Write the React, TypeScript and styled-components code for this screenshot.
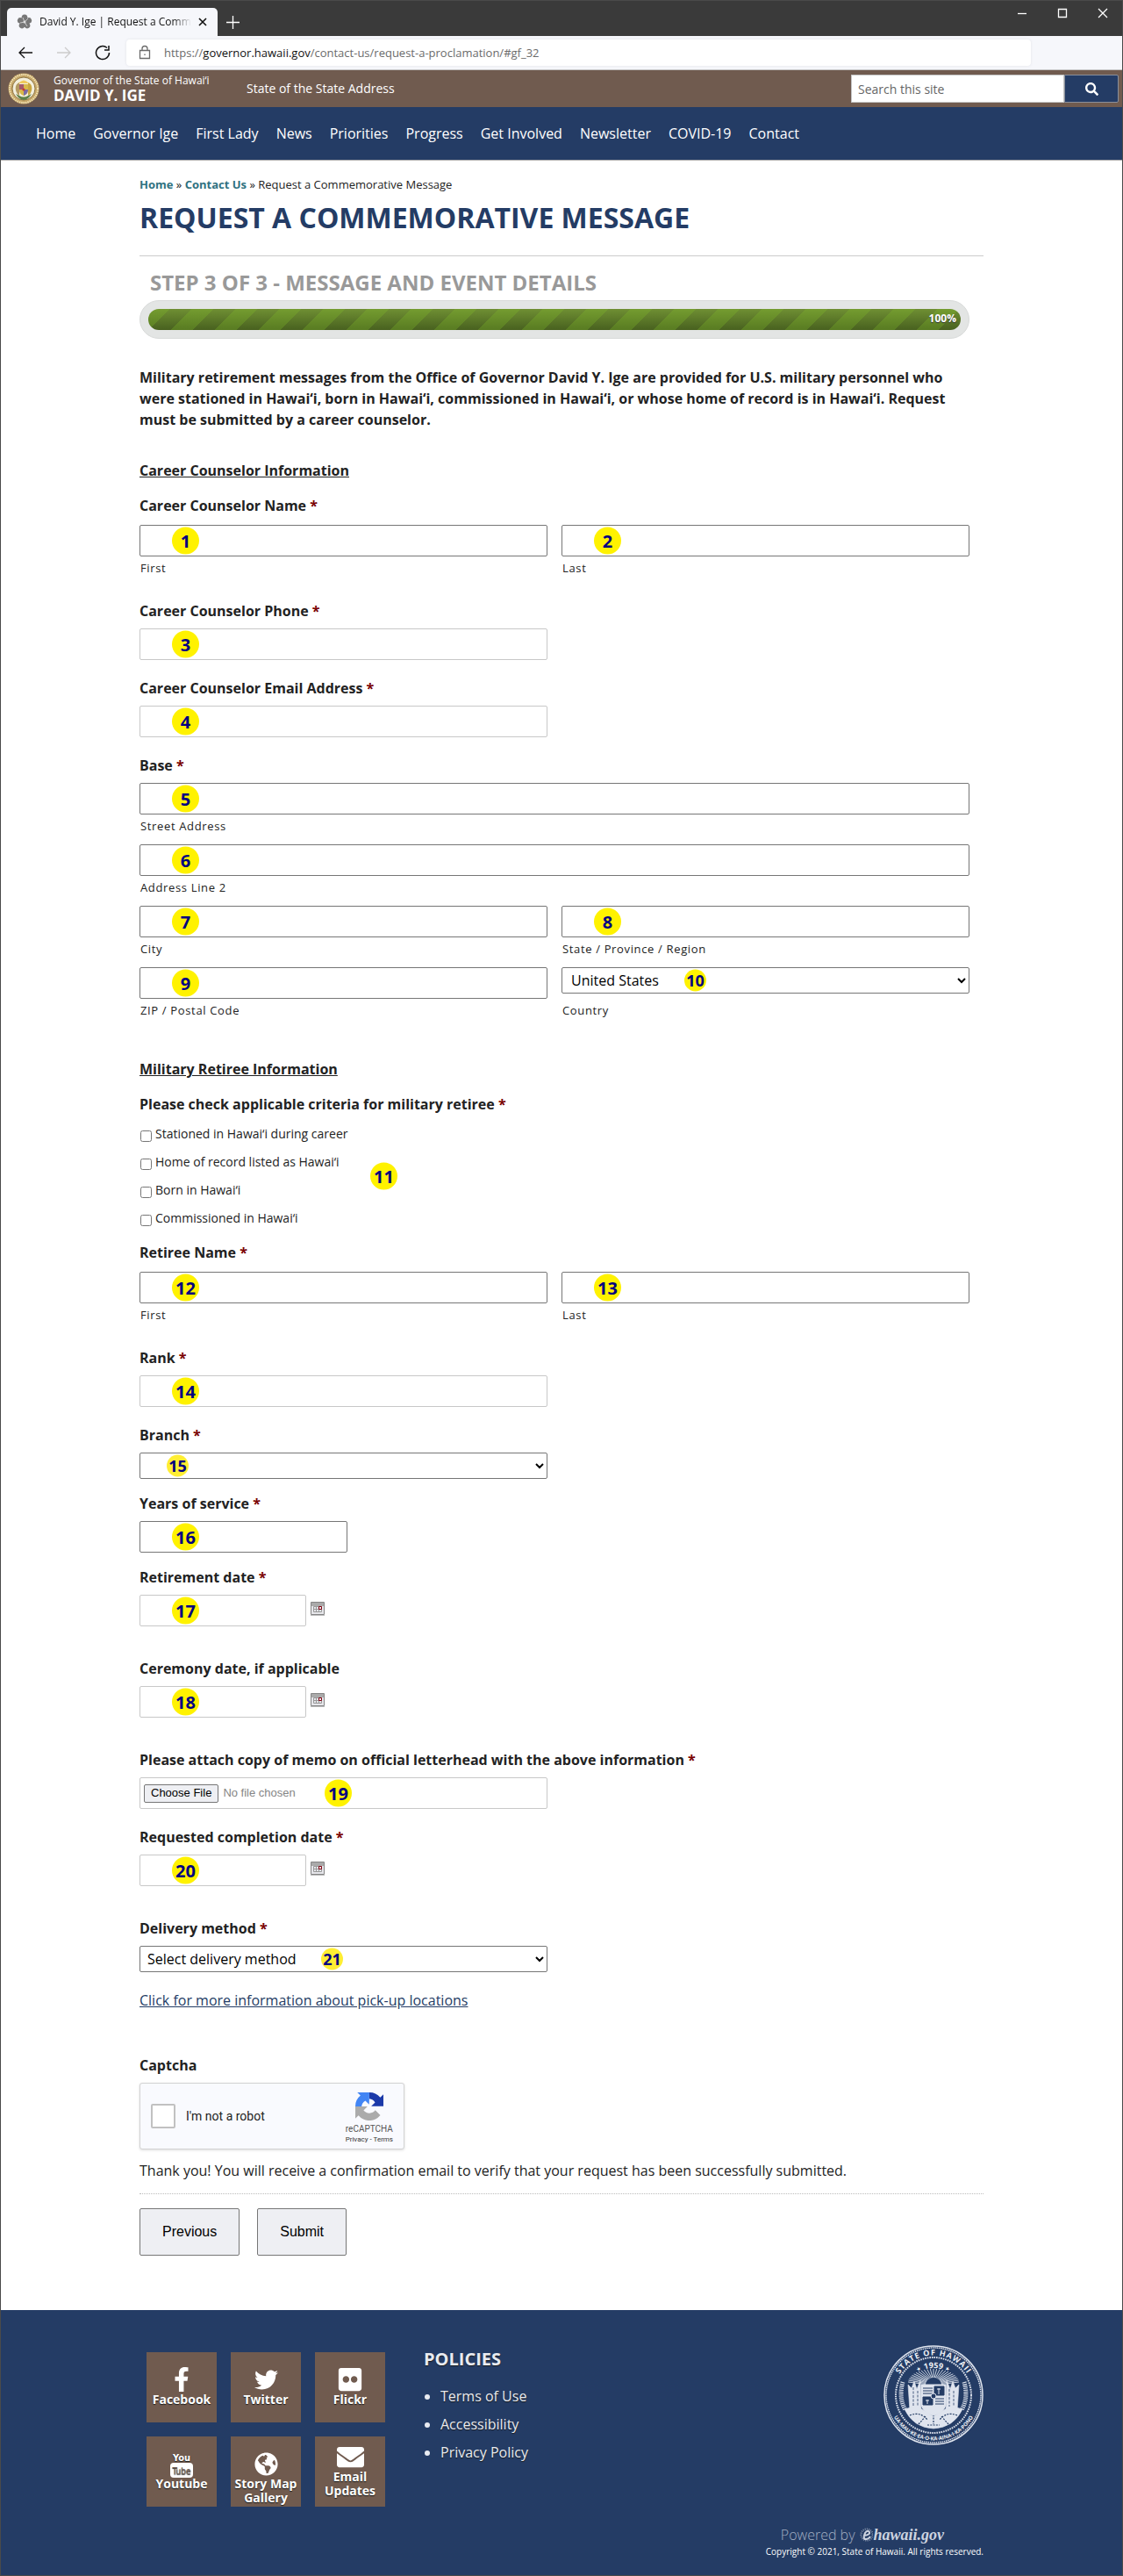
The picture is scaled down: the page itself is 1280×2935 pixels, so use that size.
import React from "react";
import styled, { createGlobalStyle } from "styled-components";
import {
  FaFacebookF,
  FaTwitter,
  FaFlickr,
  FaGlobeAmericas,
  FaEnvelope,
  FaSearch,
} from "react-icons/fa";

const navy = "#243c65";
const brown = "#705b4f";

const GlobalStyle = createGlobalStyle`
  *, *::before, *::after { box-sizing: border-box; }
  body {
    margin: 0;
    background: #fff;
    color: #222;
    font: 16px/24px "Open Sans", "Noto Sans", sans-serif;
  }
  a { color: inherit; text-decoration: none; }
  input, select, button { font-family: inherit; }
`;

const Window = styled.div`
  border: 1px solid #4a4a4a;
`;

/* Browser chrome */
const TitleBar = styled.div`
  display: flex;
  align-items: flex-end;
  height: 40px;
  padding-left: 7px;
  background: #3a3a3a;
`;
const Tab = styled.div`
  display: flex;
  align-items: center;
  width: 240px;
  height: 32px;
  padding: 0 12px 0 11px;
  background: #f6f7fb;
  border-radius: 5px 5px 0 0;
  color: #111;
  font-size: 12px;
`;
const TabTitle = styled.span`
  flex: 1;
  margin: 0 8px;
  overflow: hidden;
  white-space: nowrap;
  mask-image: linear-gradient(90deg, #000 88%, transparent);
`;
const ChromeButton = styled.button`
  display: flex;
  padding: 0;
  border: 0;
  background: none;
  color: inherit;
`;
const NewTab = styled(ChromeButton)`
  align-self: center;
  margin: 8px 0 0 10px;
  color: #fff;
`;
const WindowControls = styled.div`
  display: flex;
  gap: 34px;
  align-self: flex-start;
  margin: 7px 16px 0 auto;
  color: #fff;
`;
const Toolbar = styled.div`
  display: flex;
  align-items: center;
  height: 39px;
  padding-left: 19px;
  background: #f6f7fb;
  border-bottom: 1px solid #c4c4c4;
`;
const ToolbarButtons = styled.div`
  display: flex;
  gap: 26px;
  color: #111;
`;
const AddressBar = styled.div`
  display: flex;
  flex: 1;
  align-items: center;
  gap: 15px;
  height: 30px;
  margin: 0 104px 0 18px;
  padding-left: 14px;
  background: #fff;
  border-radius: 4px;
  box-shadow: 0 0 3px #e0e1e6;
  color: #6b6b6b;
  font-size: 13px;
  b { color: #111; font-weight: 400; }
`;

/* Site header */
const StateBar = styled.header`
  display: flex;
  align-items: center;
  height: 42px;
  padding: 0 4px 0 8px;
  background: ${brown};
  color: #fff;
`;
const Brand = styled.a`
  display: flex;
  align-items: center;
  gap: 16px;
  width: 272px;
`;
const BrandText = styled.span`
  display: grid;
  font-size: 12px;
  line-height: 16px;
  strong { font-size: 17px; line-height: 18px; }
`;
const AddressLink = styled.a`
  font-size: 14px;
`;
const SearchForm = styled.form`
  display: flex;
  height: 32px;
  margin-left: auto;
`;
const SearchInput = styled.input`
  width: 243px;
  padding: 0 7px;
  border: 1px solid #c4c4c4;
  font-size: 14px;
  &::placeholder { color: #666; }
`;
const SearchButton = styled.button`
  display: flex;
  align-items: center;
  justify-content: center;
  width: 62px;
  border: 1px solid #8a8f9b;
  border-radius: 0 2px 2px 0;
  background: ${navy};
  color: #fff;
`;
const Nav = styled.nav`
  display: flex;
  align-items: center;
  gap: 20px;
  height: 61px;
  padding-left: 40px;
  background: ${navy};
  border-bottom: 1px solid #aaa;
  color: #fff;
`;

/* Page content */
const Content = styled.main`
  width: 100%;
  max-width: 962px;
  margin: 0 auto;
  padding: 17px 0 62px;
`;
const Crumbs = styled.nav`
  font-size: 13px;
  line-height: 20px;
  a { color: #2f7281; font-weight: 700; }
`;
const Title = styled.h1`
  margin: 6px 0 18px;
  padding-bottom: 21px;
  border-bottom: 1px solid #ccc;
  color: ${navy};
  font-size: 32px;
  line-height: 44px;
`;
const Form = styled.form`
  padding-right: 16px;
`;
const Step = styled.h2`
  margin: 0;
  padding-left: 12px;
  color: #999;
  font-size: 24px;
  line-height: 24px;
`;
const Track = styled.div`
  margin-top: 8px;
  padding: 9px;
  border: 1px solid #d8dad9;
  border-radius: 22px;
  background: #e3e5e4;
`;
const Bar = styled.div`
  height: 24px;
  padding-right: 5px;
  border-radius: 12px;
  background:
    linear-gradient(135deg, rgba(130, 190, 40, 0.28) 25%, transparent 25%, transparent 50%, rgba(130, 190, 40, 0.28) 50%, rgba(130, 190, 40, 0.28) 75%, transparent 75%) 0 0 / 50px 50px,
    linear-gradient(#6f8f33, #48611f);
  color: #fff;
  font-size: 12px;
  font-weight: 700;
  line-height: 22px;
  text-align: right;
  text-shadow: 0 1px 1px #333;
`;
const Intro = styled.p`
  margin: 32px 0 34px;
  font-weight: 700;
`;
const SectionHeading = styled.h3`
  margin: 0 0 16px;
  font-size: 16px;
  line-height: 24px;
  text-decoration: underline;
`;
const FieldBox = styled.div<{ $after: number; $gap?: number }>`
  display: flex;
  flex-direction: column;
  gap: ${(p) => p.$gap ?? 8}px;
  margin-bottom: ${(p) => p.$after}px;
`;
const Label = styled.label`
  font-weight: 700;
`;
const Required = styled.span`
  color: #790000;
`;
const InputGrid = styled.div`
  display: grid;
  grid-template-columns: 1fr 1fr;
  gap: 11px 16px;
`;
const Cell = styled.div<{ $wide?: boolean }>`
  grid-column: ${(p) => (p.$wide ? "1 / -1" : "auto")};
  display: flex;
  flex-direction: column;
`;
const Caption = styled.label`
  padding: 4px 0 1px 1px;
  font-size: 13px;
  line-height: 18px;
  letter-spacing: 0.05em;
`;
const Control = styled.div<{ $size?: "half" | "years" | "date" }>`
  position: relative;
  display: flex;
  width: ${(p) =>
    p.$size === "half"
      ? "calc(50% - 8px)"
      : p.$size === "years"
        ? "237px"
        : p.$size === "date"
          ? "190px"
          : "100%"};
`;
const TextInput = styled.input<{ $light?: boolean }>`
  width: 100%;
  height: 36px;
  padding: 0 8px;
  border: 1px solid ${(p) => (p.$light ? "#c8c8c8" : "#767676")};
  border-radius: 2px;
  background: #fff;
  font-size: 16px;
`;
const FileInput = styled(TextInput)`
  padding: 6px 4px;
  color: #858585;
  font: 13px/21px "Liberation Sans", Arial, sans-serif;
  &::file-selector-button {
    height: 21px;
    margin-right: 5px;
    padding: 0 7px;
    border: 1px solid #767676;
    border-radius: 2px;
    background: #eeeff3;
    color: #000;
    font: 13px/18px "Liberation Sans", Arial, sans-serif;
  }
`;
const Select = styled.select<{ $inset?: boolean }>`
  width: 100%;
  height: 30px;
  padding-left: ${(p) => (p.$inset ? 6 : 4)}px;
  border: 1px solid #767676;
  border-radius: 2px;
  background: #fff;
  color: #000;
  font-size: 16px;
`;
const SelectSpace = styled.div`
  height: 36px;
`;
const Badge = styled.span<{ $left?: number; $small?: boolean; $soft?: boolean }>`
  position: absolute;
  top: 50%;
  left: ${(p) => p.$left ?? 37}px;
  width: ${(p) => (p.$small ? 25 : 31)}px;
  height: ${(p) => (p.$small ? 25 : 31)}px;
  border-radius: 50%;
  background: ${(p) => (p.$soft ? "#ffee33" : "#fff200")};
  color: #000080;
  font-size: ${(p) => (p.$small ? 18 : 20)}px;
  font-weight: 700;
  line-height: ${(p) => (p.$small ? 25 : 31)}px;
  text-align: center;
  transform: translateY(-50%);
  pointer-events: none;
`;
const DateRow = styled.div`
  display: flex;
  gap: 5px;
`;
const CalendarButton = styled.button`
  align-self: flex-start;
  display: flex;
  margin-top: 8px;
  padding: 0;
  border: 0;
  background: none;
`;
const Checks = styled.div`
  position: relative;
  margin: 6px 0 11px;
`;
const CheckRow = styled.label`
  display: flex;
  align-items: flex-start;
  gap: 4px;
  height: 32px;
  font-size: 14px;
  line-height: 32px;
  input { width: 13px; height: 13px; margin: 12px 0 0 1px; }
`;
const PickupLink = styled.a`
  color: ${navy};
  text-decoration: underline;
`;
const Captcha = styled.div`
  display: flex;
  align-items: center;
  width: 302px;
  height: 76px;
  padding: 0 12px;
  border: 1px solid #d3d3d3;
  border-radius: 3px;
  background: #f9fafe;
  box-shadow: 0 1px 3px #ddd;
  font: 14px/20px Roboto, sans-serif;
`;
const CaptchaCheck = styled.input`
  appearance: none;
  width: 28px;
  height: 28px;
  margin: 0 12px 0 0;
  border: 2px solid #c1c1c1;
  border-radius: 2px;
  background: #fff;
`;
const CaptchaBrand = styled.div`
  align-self: flex-start;
  display: grid;
  justify-items: center;
  margin-left: auto;
  padding-top: 10px;
  color: #555;
  font-size: 10px;
  line-height: 12px;
  span { padding-top: 4px; }
  small { font-size: 8px; line-height: 12px; color: #333; }
`;
const Thanks = styled.p`
  margin: 12px -16px 16px 0;
  padding-bottom: 14px;
  border-bottom: 1px dotted #bbb;
`;
const Actions = styled.div`
  display: flex;
  gap: 20px;
`;
const ActionButton = styled.button`
  height: 54px;
  padding: 0 25px;
  border: 1px solid #767676;
  border-radius: 2px;
  background: #eeeff3;
  color: #000;
  font: 16px "Liberation Sans", Arial, sans-serif;
`;

/* Footer */
const Footer = styled.footer`
  padding: 40px 0 20px;
  background: ${navy};
  color: #e8ebf1;
`;
const FooterInner = styled.div`
  width: 100%;
  max-width: 962px;
  margin: 0 auto;
`;
const FooterTop = styled.div`
  display: flex;
  align-items: flex-start;
  text-shadow: 0 1px 1px #1b1b1b;
`;
const Tiles = styled.div`
  display: grid;
  grid-template-columns: repeat(3, 80px);
  gap: 16px;
  margin: 8px 44px 0 8px;
`;
const Tile = styled.a<{ $raised?: boolean }>`
  display: flex;
  flex-direction: column;
  align-items: center;
  height: 80px;
  padding-top: ${(p) => (p.$raised ? 8 : 16)}px;
  background: ${brown};
  color: #fff;
  font-size: 14px;
  font-weight: 700;
  line-height: 16px;
  text-align: center;
`;
const TileIcon = styled.span`
  display: flex;
  align-items: center;
  justify-content: center;
  height: 30px;
`;
const Policies = styled.section`
  h2 { margin: 0; font-size: 20px; line-height: 32px; }
  ul { margin: 10px 0 0; padding-left: 19px; }
  li { line-height: 32px; }
`;
const SealBox = styled.div`
  display: flex;
  margin-left: auto;
  text-shadow: none;
`;
const Credit = styled.div`
  display: grid;
  justify-items: end;
  margin-top: 20px;
`;
const Powered = styled.a`
  display: flex;
  align-items: center;
  gap: 6px;
  height: 24px;
  margin-right: 45px;
  color: #a3aec2;
  font-weight: 300;
  em { color: #cdd4e0; font: italic 700 18px/24px "Liberation Serif", serif; }
`;
const Brandmark = styled.span`
  display: flex;
  align-items: center;
`;
const Copyright = styled.small`
  font-size: 10px;
  line-height: 14px;
  color: #fff;
`;

const line = { fill: "none", stroke: "currentColor", strokeWidth: 1.3 } as const;

const Hibiscus = () => (
  <svg width="18" height="18" viewBox="0 0 18 18" fill="#777">
    {[0, 72, 144, 216, 288].map((a) => (
      <ellipse key={a} cx="9" cy="4.6" rx="3.4" ry="4" transform={`rotate(${a} 9 9)`} />
    ))}
    <path d="M9 9 13 5M9 9 7 4M9 9 4 10M9 9l3 5" stroke="#ddd" strokeWidth=".8" />
    <circle cx="9" cy="9" r="1.5" fill="#ddd" />
  </svg>
);

const StateSeal = () => (
  <svg width="36" height="36" viewBox="0 0 36 36">
    <circle cx="18" cy="18" r="17.5" fill="#c6a768" />
    <circle cx="18" cy="18" r="16" fill="none" stroke="#f1e3b8" strokeWidth="2" strokeDasharray="1.4 1" />
    <circle cx="18" cy="18" r="13" fill="#f3efdc" stroke="#8e7442" />
    <path d="M9 20c-1-5 1-8 4-9v15c-2-1-3-3-4-6Z" fill="#b59a62" />
    <path d="M27 20c1-5-1-8-4-9v15c2-1 3-3 4-6Z" fill="#c9a63f" />
    <path d="M12 12q6-7 12 0" fill="#f0c95b" />
    <path d="M13 13h10v7q0 4-5 6-5-2-5-6Z" fill="#d8b94a" />
    <path d="M13 13h5v6h-5Z" fill="#a45a6a" />
    <path d="M18 19h5q0 5-5 7Z" fill="#7a6ca6" />
    <path d="M9 24q4 7 9 7t9-7l-4 2q-5 3-10 0Z" fill="#5e8048" />
    <circle cx="18" cy="19" r="1.6" fill="#c43b32" />
  </svg>
);

const Calendar = () => (
  <svg width="16" height="16" viewBox="0 0 16 16">
    <path d="M.5.5h15v14H.5Z" fill="#e6e6ea" stroke="#858585" />
    <path d="M1 1h14v4H1Z" fill="#aaa" />
    <path d="M0 15.5h16" stroke="#bbb" />
    <path d="M3.5 5.500h9v6h-9ZM3.500 8.500h9M6.500 5.500v6M9.500 5.500v6" fill="none" stroke="#999" />
    <path d="M9.500 5.500h3v3h-3Z" fill="#eee" stroke="#800010" />
  </svg>
);

const RecaptchaLogo = () => (
  <svg width="32" height="32" viewBox="0 0 64 64">
    <path d="M64 32c0-.5 0-1 0-1.400V4.500l-7.200 7.200A32 32 0 0 0 32 0v14.300a17 17 0 0 1 13 8.500l-8.700 8.700H64Z" fill="#1c3aa9" />
    <path d="M32 0H4.500l7.200 7.200A32 32 0 0 0 0 32h14.300a17 17 0 0 1 8.500-13l8.700 8.700Z" fill="#4285f4" />
    <path d="M0 32v27.500l7.200-7.200A32 32 0 0 0 57 52.200L45.500 40.600A17 17 0 0 1 18.800 41l8.900-9Z" fill="#ababab" />
  </svg>
);

const YouTubeIcon = () => (
  <svg width="28" height="31" viewBox="0 0 28 31">
    <rect x="1" y="14" width="26" height="17" rx="4" fill="#fff" />
    <text x="14" y="12" fontSize="11" fontWeight="700" textAnchor="middle" fill="#fff" fontFamily="DejaVu Sans Condensed, Open Sans, sans-serif">You</text>
    <text x="14" y="27" fontSize="10" fontWeight="400" textAnchor="middle" fill={brown} fontFamily="DejaVu Sans Condensed, Open Sans, sans-serif">Tube</text>
  </svg>
);

const rays = Array.from({ length: 25 }, (_, i) => (Math.PI * (i + 0.5)) / 25);

const FooterSeal = () => (
  <svg width="114" height="114" viewBox="0 0 114 114" fill="none" stroke="#dfe4ee" role="img" aria-label="Seal of the State of Hawaii">
    <circle cx="57" cy="57" r="56" strokeWidth="1.500" />
    <circle cx="57" cy="57" r="54" strokeWidth="1.500" strokeDasharray="1.500 .8" />
    <circle cx="57" cy="57" r="43" strokeWidth="2" strokeDasharray="1.600 1" />
    <path id="seal-top" d="M11.500 57a45.500 45.500 0 0 1 91 0" stroke="none" />
    <path id="seal-bottom" d="M5.500 57a51.500 51.500 0 0 0 103 0" stroke="none" />
    <path id="seal-year" d="M26 57a31 31 0 0 1 62 0" stroke="none" />
    <g fill="#eef1f6" stroke="none" fontFamily="Open Sans, sans-serif" fontWeight="700" textAnchor="middle">
      <text fontSize="9" letterSpacing="1"><textPath href="#seal-top" startOffset="50%">STATE OF HAWAII</textPath></text>
      <text fontSize="6"><textPath href="#seal-bottom" startOffset="50%">UA·MAU·KE·EA·O·KA·AINA·I·KA·PONO</textPath></text>
      <text fontSize="9"><textPath href="#seal-year" startOffset="50%">⋆ 1959 ⋆</textPath></text>
    </g>
    {rays.map((a) => (
      <path
        key={a}
        strokeWidth=".9"
        d={`M${57 + Math.cos(a) * 9} ${45 - Math.sin(a) * 8}L${57 + Math.cos(a) * 29} ${43 - Math.sin(a) * 16}`}
      />
    ))}
    <path d="M22 42q-5 18 3 32M92 42q5 18-3 32" strokeWidth="5" strokeDasharray="1.200 1" />
    <path d="M28 45l4 4 3-8 3 9 4-10 1 35H30ZM86 45l-4 4-3-8-3 9-4-10-1 35h13Z" fill="#dfe4ee" strokeWidth=".6" />
    <path d="M34 48v22M39 52v18M75 50v20M80 52v18" stroke={navy} strokeWidth=".8" strokeDasharray="3 1.500" />
    <path d="M24 73q10-4 20 0l13 8 13-8q10-4 20 0-10 21-33 22-23-1-33-22Z" fill="#dfe4ee" strokeWidth=".6" />
    <path d="M30 80q12-5 20 5M84 80q-12-5-20 5M40 90l8-9M74 90l-8-9M57 76v14M50 91h14" stroke={navy} strokeWidth="1.200" strokeDasharray="2 1.300" />
    <path d="M43 45h28v21q0 10-14 14-14-4-14-14Z" fill="#dfe4ee" />
    <path d="M58 47h11v10H58ZM45 59h11v9H45ZM45 49h11M45 52h11M45 55h11M59 61h10M59 64h10M59 67h10" fill={navy} stroke={navy} />
    <path d="M63 56v-7M61 50h4M50 67v-5M48 63h4" />
    <circle cx="57" cy="58" r="3" fill={navy} />
  </svg>
);

const Swirl = () => (
  <svg width="15" height="18" viewBox="0 0 15 18" fill="none" stroke="#cdd4e0">
    <circle cx="8" cy="9" r="6.600" strokeWidth="2" strokeDasharray="1 1.200" opacity=".6" />
    <path d="M5 10q7-1 6-4-2-3-5 1-3 7 1 7 3 0 5-3" strokeWidth="2" />
  </svg>
);

const Star = () => <Required> *</Required>;

function TextField({ id, label, n, after, size = "half", light }: {
  id: string; label: string; n: number; after: number; size?: "half" | "years"; light?: boolean;
}) {
  return (
    <FieldBox $after={after}>
      <Label htmlFor={id}>{label}<Star /></Label>
      <Control $size={size}>
        <TextInput id={id} $light={light} />
        <Badge>{n}</Badge>
      </Control>
    </FieldBox>
  );
}

function DateField({ id, label, n, required }: { id: string; label: string; n: number; required?: boolean }) {
  return (
    <FieldBox $after={36}>
      <Label htmlFor={id}>{label}{required && <Star />}</Label>
      <DateRow>
        <Control $size="date">
          <TextInput id={id} $light />
          <Badge>{n}</Badge>
        </Control>
        <CalendarButton type="button" aria-label={`Pick ${label}`}><Calendar /></CalendarButton>
      </DateRow>
    </FieldBox>
  );
}

function CaptionedInput({ id, caption, n, wide }: { id: string; caption: string; n: number; wide?: boolean }) {
  return (
    <Cell $wide={wide}>
      <Control>
        <TextInput id={id} />
        <Badge>{n}</Badge>
      </Control>
      <Caption htmlFor={id}>{caption}</Caption>
    </Cell>
  );
}

function NameField({ id, label, n }: { id: string; label: string; n: number }) {
  return (
    <FieldBox $after={27} $gap={10} role="group" aria-label={label}>
      <Label as="span">{label}<Star /></Label>
      <InputGrid>
        <CaptionedInput id={`${id}-first`} caption="First" n={n} />
        <CaptionedInput id={`${id}-last`} caption="Last" n={n + 1} />
      </InputGrid>
    </FieldBox>
  );
}

const navItems = ["Home", "Governor Ige", "First Lady", "News", "Priorities", "Progress", "Get Involved", "Newsletter", "COVID-19", "Contact"];
const criteria = [
  "Stationed in Hawai‘i during career",
  "Home of record listed as Hawai‘i",
  "Born in Hawai‘i",
  "Commissioned in Hawai‘i",
];
const tiles = [
  { label: "Facebook", icon: <FaFacebookF size={28} /> },
  { label: "Twitter", icon: <FaTwitter size={27} /> },
  { label: "Flickr", icon: <FaFlickr size={30} /> },
  { label: "Youtube", icon: <YouTubeIcon /> },
  { label: "Story Map Gallery", icon: <FaGlobeAmericas size={27} /> },
  { label: "Email Updates", icon: <FaEnvelope size={31} />, raised: true },
];

function BrowserChrome() {
  return (
    <>
      <TitleBar>
        <Tab>
          <Hibiscus />
          <TabTitle>David Y. Ige | Request a Commemorative Message</TabTitle>
          <ChromeButton aria-label="Close tab">
            <svg width="10" height="10" {...line} strokeWidth="1.600"><path d="M1 1l8 8M9 1 1 9" /></svg>
          </ChromeButton>
        </Tab>
        <NewTab aria-label="New tab">
          <svg width="15" height="15" {...line}><path d="M7.500 0v15M0 7.500h15" /></svg>
        </NewTab>
        <WindowControls>
          <ChromeButton aria-label="Minimize"><svg width="12" height="14" {...line}><path d="M1 7.500h10" /></svg></ChromeButton>
          <ChromeButton aria-label="Maximize"><svg width="12" height="14" {...line}><path d="M1.500 2.500h9v9h-9Z" /></svg></ChromeButton>
          <ChromeButton aria-label="Close"><svg width="12" height="14" {...line}><path d="M1 2l10 10M11 2 1 12" /></svg></ChromeButton>
        </WindowControls>
      </TitleBar>
      <Toolbar>
        <ToolbarButtons>
          <ChromeButton aria-label="Back"><svg width="18" height="18" {...line}><path d="M17 9H2M8 3 2 9l6 6" /></svg></ChromeButton>
          <ChromeButton aria-label="Forward" disabled><svg width="18" height="18" {...line} stroke="#ccc"><path d="M1 9h15M10 3l6 6-6 6" /></svg></ChromeButton>
          <ChromeButton aria-label="Reload"><svg width="18" height="18" {...line} strokeWidth="1.500"><path d="M16.500 9A7.500 7.500 0 1 1 14 3.500M16 1v5h-5" /></svg></ChromeButton>
        </ToolbarButtons>
        <AddressBar>
          <svg width="14" height="18" {...line}><path d="M1.500 6.500h11v9h-11ZM4 6.500v-2a3 3 0 0 1 6 0v2M7 10.500v1.500" /></svg>
          <span>https://<b>governor.hawaii.gov</b>/contact-us/request-a-proclamation/#gf_32</span>
        </AddressBar>
      </Toolbar>
    </>
  );
}

export default function App() {
  return (
    <Window>
      <GlobalStyle />
      <BrowserChrome />
      <StateBar>
        <Brand href="#">
          <StateSeal />
          <BrandText>
            Governor of the State of Hawai‘i
            <strong>DAVID Y. IGE</strong>
          </BrandText>
        </Brand>
        <AddressLink href="#">State of the State Address</AddressLink>
        <SearchForm role="search">
          <SearchInput aria-label="Search this site" placeholder="Search this site" />
          <SearchButton type="button" aria-label="Search"><FaSearch size={15} /></SearchButton>
        </SearchForm>
      </StateBar>
      <Nav>
        {navItems.map((item) => <a key={item} href="#">{item}</a>)}
      </Nav>

      <Content>
        <Crumbs aria-label="Breadcrumb">
          <a href="#">Home</a> » <a href="#">Contact Us</a> » Request a Commemorative Message
        </Crumbs>
        <Title>REQUEST A COMMEMORATIVE MESSAGE</Title>
        <Form>
          <Step>STEP 3 OF 3 - MESSAGE AND EVENT DETAILS</Step>
          <Track><Bar>100%</Bar></Track>
          <Intro>
            Military retirement messages from the Office of Governor David Y. Ige are provided for U.S. military
            personnel who were stationed in Hawai‘i, born in Hawai‘i, commissioned in Hawai‘i, or whose home of
            record is in Hawai‘i. Request must be submitted by a career counselor.
          </Intro>

          <SectionHeading>Career Counselor Information</SectionHeading>
          <NameField id="counselor" label="Career Counselor Name" n={1} />
          <TextField id="phone" label="Career Counselor Phone" n={3} after={20} light />
          <TextField id="email" label="Career Counselor Email Address" n={4} after={20} light />
          <FieldBox $after={45} role="group" aria-label="Base">
            <Label as="span">Base<Star /></Label>
            <InputGrid>
              <CaptionedInput id="street" caption="Street Address" n={5} wide />
              <CaptionedInput id="line2" caption="Address Line 2" n={6} wide />
              <CaptionedInput id="city" caption="City" n={7} />
              <CaptionedInput id="region" caption="State / Province / Region" n={8} />
              <CaptionedInput id="zip" caption="ZIP / Postal Code" n={9} />
              <Cell>
                <SelectSpace>
                  <Control>
                    <Select id="country" $inset><option>United States</option></Select>
                    <Badge $left={140} $small>10</Badge>
                  </Control>
                </SelectSpace>
                <Caption htmlFor="country">Country</Caption>
              </Cell>
            </InputGrid>
          </FieldBox>

          <SectionHeading>Military Retiree Information</SectionHeading>
          <div role="group" aria-label="Applicable criteria">
            <Label as="span">Please check applicable criteria for military retiree<Star /></Label>
            <Checks>
              {criteria.map((c) => (
                <CheckRow key={c}><input type="checkbox" />{c}</CheckRow>
              ))}
              <Badge $left={263}>11</Badge>
            </Checks>
          </div>
          <NameField id="retiree" label="Retiree Name" n={12} />
          <TextField id="rank" label="Rank" n={14} after={20} light />
          <FieldBox $after={16}>
            <Label htmlFor="branch">Branch<Star /></Label>
            <Control $size="half">
              <Select id="branch"><option></option></Select>
              <Badge $left={31} $small $soft>15</Badge>
            </Control>
          </FieldBox>
          <TextField id="years" label="Years of service" n={16} after={16} size="years" />
          <DateField id="retirement" label="Retirement date" n={17} required />
          <DateField id="ceremony" label="Ceremony date, if applicable" n={18} />
          <FieldBox $after={20}>
            <Label htmlFor="memo">Please attach copy of memo on official letterhead with the above information<Star /></Label>
            <Control $size="half">
              <FileInput id="memo" type="file" $light />
              <Badge $left={211}>19</Badge>
            </Control>
          </FieldBox>
          <DateField id="completion" label="Requested completion date" n={20} required />
          <FieldBox $after={20}>
            <Label htmlFor="delivery">Delivery method<Star /></Label>
            <Control $size="half">
              <Select id="delivery"><option>Select delivery method</option></Select>
              <Badge $left={207} $small $soft>21</Badge>
            </Control>
          </FieldBox>
          <FieldBox $after={50}>
            <span><PickupLink href="#">Click for more information about pick-up locations</PickupLink></span>
          </FieldBox>
          <FieldBox $after={0}>
            <Label as="span">Captcha</Label>
            <Captcha>
              <CaptchaCheck id="robot" type="checkbox" />
              <label htmlFor="robot">I'm not a robot</label>
              <CaptchaBrand>
                <RecaptchaLogo />
                <span>reCAPTCHA</span>
                <small><a href="#">Privacy</a> - <a href="#">Terms</a></small>
              </CaptchaBrand>
            </Captcha>
          </FieldBox>
          <Thanks>Thank you! You will receive a confirmation email to verify that your request has been successfully submitted.</Thanks>
          <Actions>
            <ActionButton type="button">Previous</ActionButton>
            <ActionButton type="button">Submit</ActionButton>
          </Actions>
        </Form>
      </Content>

      <Footer>
        <FooterInner>
          <FooterTop>
            <Tiles>
              {tiles.map((t) => (
                <Tile key={t.label} href="#" $raised={t.raised}>
                  <TileIcon>{t.icon}</TileIcon>
                  {t.label}
                </Tile>
              ))}
            </Tiles>
            <Policies>
              <h2>POLICIES</h2>
              <ul>
                <li><a href="#">Terms of Use</a></li>
                <li><a href="#">Accessibility</a></li>
                <li><a href="#">Privacy Policy</a></li>
              </ul>
            </Policies>
            <SealBox><FooterSeal /></SealBox>
          </FooterTop>
          <Credit>
            <Powered href="#">
              Powered by
              <Brandmark><Swirl /><em>hawaii.gov</em></Brandmark>
            </Powered>
            <Copyright>Copyright © 2021, State of Hawaii. All rights reserved.</Copyright>
          </Credit>
        </FooterInner>
      </Footer>
    </Window>
  );
}
